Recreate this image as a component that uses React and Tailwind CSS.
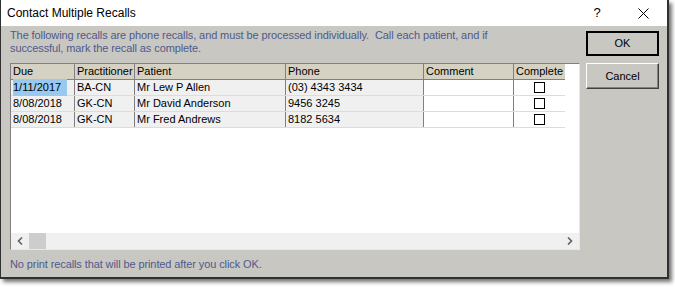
import React from 'react';

const ROWS = [
  { due: '1/11/2017', prac: 'BA-CN', patient: 'Mr Lew P Allen', phone: '(03) 4343 3434', selected: true },
  { due: '8/08/2018', prac: 'GK-CN', patient: 'Mr David Anderson', phone: '9456 3245' },
  { due: '8/08/2018', prac: 'GK-CN', patient: 'Mr Fred Andrews', phone: '8182 5634' },
];

function Checkbox() {
  return <div className="w-[11px] h-[11px] border border-black bg-white" />;
}

function HeaderCell({ w, children, last }) {
  return (
    <div className={`${w} h-full flex items-center pl-[2px] overflow-hidden whitespace-nowrap ${last ? '' : 'border-r border-[#808080]'}`}>
      {children}
    </div>
  );
}

export default function App() {
  return (
    <div className="w-[675px] h-[287px] bg-white" style={{ fontFamily: '"Liberation Sans", Arial, sans-serif' }}>
      <div className="w-[669px] h-[279px] flex flex-col border-l border-r-2 border-b-2 border-[#303030] shadow-[3px_3px_4px_rgba(0,0,0,0.55)]">
        {/* title bar */}
        <div className="h-[26px] bg-white flex items-center shrink-0">
          <span className="pl-[6px] text-[12px] text-black flex-1">Contact Multiple Recalls</span>
          <span className="w-[20px] text-center text-[13px] text-black mr-[31px]">?</span>
          <svg width="11" height="11" viewBox="0 0 11 11" className="mr-[18px]">
            <path d="M0.5 0.5L10.5 10.5M10.5 0.5L0.5 10.5" stroke="#000" strokeWidth="1" />
          </svg>
        </div>

        {/* body */}
        <div className="flex-1 bg-[#c9c7c2] flex">
          <div className="w-[585px] pl-[9px] flex flex-col">
            <p className="pt-[3px] text-[11px] leading-[13px] tracking-[-0.1px] text-[#4e5a8c]">
              The following recalls are phone recalls, and must be processed individually.&nbsp; Call each patient, and if
              <br />
              successful, mark the recall as complete.
            </p>

            {/* grid */}
            <div className="mt-[8px] w-[570px] h-[187px] border-t border-l border-[#808080] border-r border-b border-r-[#e8e8e8] border-b-[#e8e8e8] bg-white flex flex-col text-[11px] text-black">
              <div className="flex-1 flex flex-col">
                <div className="h-[16px] flex w-[554px] bg-[#d5d2c3] border-b border-[#808080]">
                  <HeaderCell w="w-[64px]">Due</HeaderCell>
                  <HeaderCell w="w-[60px]">Practitioner</HeaderCell>
                  <HeaderCell w="w-[151px]">Patient</HeaderCell>
                  <HeaderCell w="w-[138px]">Phone</HeaderCell>
                  <HeaderCell w="w-[90px]">Comment</HeaderCell>
                  <HeaderCell w="w-[51px]" last>Complete</HeaderCell>
                </div>
                {ROWS.map((r, i) => (
                  <div key={i} className="h-[16px] flex w-[554px] border-b border-[#dcdcdc]">
                    <div className="w-[64px] bg-[#f0f0f0] border-r border-[#808080] flex items-center pl-[2px]">
                      <span className={r.selected ? 'bg-[#99c9ef] pr-[6px]' : ''}>{r.due}</span>
                    </div>
                    <div className="w-[60px] bg-[#f0f0f0] border-r border-[#808080] flex items-center pl-[2px]">{r.prac}</div>
                    <div className="w-[151px] bg-[#f0f0f0] border-r border-[#808080] flex items-center pl-[2px]">{r.patient}</div>
                    <div className="w-[138px] bg-[#f0f0f0] border-r border-[#808080] flex items-center pl-[2px]">{r.phone}</div>
                    <div className="w-[90px] bg-white border-r border-[#808080]" />
                    <div className="w-[51px] bg-white flex items-center justify-center">
                      <Checkbox />
                    </div>
                  </div>
                ))}
              </div>
              {/* horizontal scrollbar */}
              <div className="h-[16px] bg-[#f0f0f0] flex items-center shrink-0">
                <div className="w-[18px] flex items-center justify-center">
                  <svg width="6" height="8" viewBox="0 0 6 8">
                    <path d="M5 0.5L1.5 4L5 7.5" stroke="#606060" strokeWidth="1.6" fill="none" />
                  </svg>
                </div>
                <div className="w-[17px] h-[16px] bg-[#cdcdcd]" />
                <div className="flex-1" />
                <div className="w-[18px] flex items-center justify-center">
                  <svg width="6" height="8" viewBox="0 0 6 8">
                    <path d="M1 0.5L4.5 4L1 7.5" stroke="#606060" strokeWidth="1.6" fill="none" />
                  </svg>
                </div>
              </div>
            </div>

            <p className="mt-[8px] text-[11px] leading-[13px] tracking-[-0.1px] text-[#4e5a8c]">
              No print recalls that will be printed after you click OK.
            </p>
          </div>

          {/* buttons */}
          <div className="flex flex-col pt-[5px] gap-[7px]">
            <button className="w-[73px] h-[25px] bg-[#c9c7c2] border-2 border-black text-[11px] text-black flex items-center justify-center">
              OK
            </button>
            <button className="w-[73px] h-[26px] bg-[#c9c7c2] border border-t-white border-l-white border-r-[#404040] border-b-[#404040] shadow-[inset_-1px_-1px_0_#808080] text-[11px] text-black flex items-center justify-center">
              Cancel
            </button>
          </div>
        </div>
      </div>
    </div>
  );
}
